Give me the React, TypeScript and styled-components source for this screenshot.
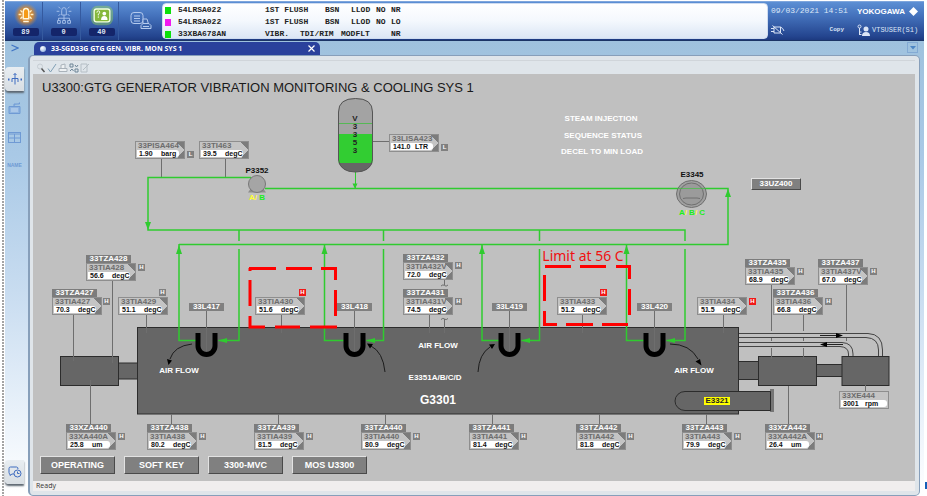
import React from "react";
import styled, { createGlobalStyle, css } from "styled-components";

const GlobalStyle = createGlobalStyle`
  * { box-sizing: border-box; }
  body { margin: 0; background: #fff; }
  button { font: inherit; border: 0; padding: 0; margin: 0; background: none; color: inherit; }
  h1, ul, li { margin: 0; padding: 0; list-style: none; font-weight: normal; }
`;

const sans = `"Liberation Sans", Arial, sans-serif`;
const mono = `"Liberation Mono", "Courier New", monospace`;
const ui = `"Open Sans", "Noto Sans", sans-serif`;

/* ---------- shell ---------- */

const Page = styled.div`
  display: flex;
  flex-direction: column;
  min-height: 100vh;
  padding: 1px 3px 0 5px;
  font-family: ${sans};
  background:
    linear-gradient(#1560b8, #1560b8) right bottom 7px / 2px 7px no-repeat,
    radial-gradient(circle at 3px 1px, #a4a4a4 1px, transparent 1px) 0 30px / 5px 3px repeat-y,
    #fff;
`;

const Header = styled.header`
  display: flex;
  height: 40px;
  flex: none;
  border-top: 1px solid #7fa6dc;
  border-bottom: 1px solid #1c3566;
  background: linear-gradient(#5c8fd4, #4573bd 35%, #24458f 90%, #1d3a80);
`;

const AlarmButton = styled.button`
  display: flex;
  flex-direction: column;
  align-items: center;
  justify-content: flex-end;
  width: 38px;
  padding: 0 0 4px 4px;
  border-right: 1px solid #355a9f;
  color: #dfe6f5;

  svg {
    flex: none;
  }
`;

const AlarmCount = styled.span`
  width: 26px;
  margin-top: 1px;
  border-radius: 2px;
  background: #14256a;
  font: bold 7px/8px ${mono};
  text-align: center;
`;

const PrintButton = styled.button`
  display: grid;
  place-items: center;
  width: 43px;
`;

const Messages = styled.ul`
  flex: 1;
  min-width: 0;
  margin: 1px 0 1px;
  padding: 0 2px;
  border-radius: 4px;
  border: 1px solid #cfdcf0;
  background: linear-gradient(#fff, #f4f8fd 50%, #dbe6f5);
`;

const Message = styled.li`
  display: flex;
  align-items: center;
  height: 12px;
  font: bold 8px/10px ${mono};
  color: #222;
  white-space: pre;
`;

const Swatch = styled.i<{ $color: string }>`
  width: 6px;
  height: 7px;
  margin-right: 7px;
  background: ${(p) => p.$color};
`;

const Cell = styled.span<{ $w: number }>`
  flex: 0 0 ${(p) => p.$w}px;
`;

const Session = styled.div`
  display: grid;
  grid-template-columns: 86px 1fr;
  grid-template-rows: 17px 21px;
  align-items: center;
  width: 156px;
  padding-left: 3px;
  color: #dbe5f6;
`;

const Clock = styled.time`
  font: 8px/10px ${mono};
  white-space: nowrap;
`;

const Brand = styled.div`
  display: flex;
  align-items: center;
  gap: 4px;
  padding-top: 2px;
  font: bold 8px/10px ${sans};
  color: #fff;
`;

const Tools = styled.div`
  display: flex;
  justify-content: space-between;
  align-items: center;
  padding-right: 13px;
`;

const CopyButton = styled.button`
  font: bold 6px/10px ${mono};
`;

const User = styled.div`
  display: flex;
  align-items: center;
  gap: 2px;
  font: 7px/10px ${mono};
`;

const Body = styled.div`
  display: flex;
  flex: 1;
  padding-right: 4px;
  background: linear-gradient(#9fc2de, #a9c9e6 25%, #c8dcf0 55%, #edf4fb 85%, #fff);
`;

const Side = styled.nav`
  display: flex;
  flex-direction: column;
  align-items: flex-start;
  width: 23px;
  flex: none;
`;

const SideButton = styled.button<{ $h: number }>`
  display: grid;
  place-items: center;
  width: 19px;
  height: ${(p) => p.$h}px;
  font: bold 5px/8px ${sans};
  color: #6f9ad4;
`;

const SideTab = styled(SideButton)`
  border-radius: 4px 0 0 4px;
  background: linear-gradient(#e8edf1, #d8dee3);
  box-shadow: 0 2px 2px #5c6670;
`;

const SideGap = styled.div<{ $h?: number }>`
  flex: ${(p) => (p.$h ? `0 0 ${p.$h}px` : "1")};
`;

const Main = styled.main`
  display: flex;
  flex-direction: column;
  flex: 1;
  min-width: 0;
`;

const TabBar = styled.div`
  display: flex;
  align-items: flex-end;
  justify-content: space-between;
  height: 14px;
  padding: 0 2px 0 6px;
`;

const Tab = styled.div`
  display: flex;
  align-items: center;
  width: 286px;
  height: 13px;
  padding: 0 5px 0 6px;
  border-radius: 5px 5px 0 0;
  background: #2a419c;
  color: #fff;
  font: bold 7px/10px ${ui};
`;

const Orb = styled.i`
  width: 6px;
  height: 6px;
  margin-right: 5px;
  border-radius: 50%;
  background: radial-gradient(circle at 35% 30%, #fff, #7ea4dc);
`;

const Close = styled.button`
  display: grid;
  margin-left: auto;
`;

const Drop = styled.button`
  display: grid;
  place-items: center;
  width: 11px;
  height: 11px;
  margin-bottom: 2px;
  border: 1px solid #83aad4;
`;

const Frame = styled.section`
  display: flex;
  flex-direction: column;
  flex: 1;
  padding: 4px 4px 4px 3px;
  border: 1px solid #879fba;
  border-left-width: 2px;
  border-radius: 5px;
  background: #dfe5ea;
`;

const Toolbar = styled.div`
  display: flex;
  align-items: center;
  gap: 1px;
  height: 14px;
  padding-left: 3px;
  border-top: 1px solid #d0d5da;
`;

const ToolButton = styled.button`
  display: grid;
  width: 10px;
  height: 10px;
`;

const Canvas = styled.div`
  position: relative;
  display: flex;
  flex-direction: column;
  flex: 1;
  min-height: 406px;
  overflow: hidden;
  background: #c0c0c0;
`;

const Title = styled.h1`
  padding: 6px 0 0 9px;
  font: 13px/16px ${sans};
  color: #1a1a1a;
`;

const Actions = styled.div`
  display: flex;
  gap: 9px;
  margin: auto 0 7px 7px;
`;

const raised = css`
  border: 1px solid;
  border-color: #e2e2e2 #4a4a4a #4a4a4a #e2e2e2;
  background: #808080;
  color: #fff;
`;

const Action = styled.button`
  ${raised}
  width: 75px;
  height: 18px;
  font: bold 9px/10px ${sans};
`;

const Status = styled.footer`
  height: 10px;
  padding-left: 3px;
  background: #f0eeee;
  font: 7px/10px ${ui};
  color: #333;
`;

/* ---------- mimic parts ---------- */

/* Diagram coordinates are screen units; the drawing area starts here. */
const OX = 33;
const OY = 74;

const Drawing = styled.svg`
  position: absolute;
  left: 0;
  top: 0;
  width: 882px;
  height: 406px;
`;

const placed = css<{ $x: number; $y: number }>`
  position: absolute;
  left: ${(p) => p.$x - OX}px;
  top: ${(p) => p.$y - OY}px;
`;

const Label = styled.div<{ $x: number; $y: number; $color?: string; $size?: number }>`
  ${placed}
  transform: translateX(-50%);
  font: bold ${(p) => p.$size ?? 8}px/10px ${sans};
  color: ${(p) => p.$color ?? "#fff"};
  white-space: nowrap;
`;

const Caption = styled(Label)`
  font: 14px/16px "Noto Sans", sans-serif;
`;

const VesselName = styled(Label)`
  width: 6px;
  line-height: 8px;
  text-align: center;
  white-space: normal;
  word-break: break-all;
`;

const Part = styled.span<{ $color: string }>`
  color: ${(p) => p.$color};
`;

const CoolerTag = styled.div<{ $x: number; $y: number }>`
  ${placed}
  width: 35px;
  height: 8px;
  background: #808080;
  color: #fff;
  font: bold 8px/8px ${sans};
  text-align: center;
`;

const YellowTag = styled(CoolerTag)`
  width: 26px;
  background: #ffff00;
  color: #222;
`;

const LinkButton = styled.button<{ $x: number; $y: number }>`
  ${placed}
  ${raised}
  width: 50px;
  height: 12px;
  font: bold 8px/10px ${sans};
`;

const Node = styled.div<{ $x: number; $y: number }>`
  ${placed}
  width: 50px;
`;

const Trip = styled.div`
  width: 45px;
  height: 8px;
  background: #7c7c7c;
  color: #fff;
  font: bold 8px/8px ${sans};
  text-align: center;
`;

const Plate = styled.div<{ $plain?: boolean }>`
  height: 18px;
  border: 1px solid #8e8e8e;
  background: ${(p) =>
    p.$plain
      ? "#c4c4c4"
      : `linear-gradient(to top right, transparent 50%, #7c7c7c 52%) right top / 8px 8px no-repeat,
         linear-gradient(to bottom right, transparent 50%, #7c7c7c 52%) right bottom / 7px 8px no-repeat, #c4c4c4`};
`;

const TagName = styled.div`
  height: 8px;
  padding-left: 2px;
  font: bold 8px/8px ${sans};
  color: #6c6c6c;
`;

const Value = styled.div<{ $plain?: boolean }>`
  display: grid;
  grid-template-columns: 22px auto;
  height: 7px;
  margin: 0 ${(p) => (p.$plain ? 1 : 5)}px 0 1px;
  padding-left: 2px;
  border-radius: 0 3px 3px 0;
  background: #fff;
  color: #111;
  font: bold 7px/7px ${sans};
`;

const Flag = styled.div<{ $x: number; $y: number; $alarm?: boolean }>`
  ${placed}
  width: 7px;
  height: 7px;
  background: ${(p) => (p.$alarm ? "#f01818" : "#808080")};
  color: #fff;
  font: bold 6px/7px ${sans};
  text-align: center;
`;

type Reading = {
  x: number;
  y: number;
  tag: string;
  value: string;
  unit: string;
  trip?: string;
  flag?: [string, number, number];
  alarm?: boolean;
  plain?: boolean;
};

const readings: Reading[] = [
  { x: 135, y: 141, tag: "33PISA464", value: "1.90", unit: "barg", flag: ["L", 187, 151] },
  { x: 199, y: 141, tag: "33TI463", value: "39.5", unit: "degC" },
  { x: 389, y: 134, tag: "33LISA423", value: "141.0", unit: "LTR", flag: ["L", 441, 144] },
  { x: 86, y: 263, tag: "33TIA428", value: "56.6", unit: "degC", trip: "33TZA428", flag: ["H", 138, 264] },
  { x: 52, y: 297, tag: "33TIA427", value: "70.3", unit: "degC", trip: "33TZA427", flag: ["H", 103, 298] },
  { x: 118, y: 297, tag: "33TIA429", value: "51.1", unit: "degC", flag: ["H", 159, 289] },
  { x: 255, y: 297, tag: "33TIA430", value: "51.6", unit: "degC", flag: ["H", 299, 289], alarm: true },
  { x: 403, y: 262, tag: "33TIA432V", value: "72.0", unit: "degC", trip: "33TZA432", flag: ["H", 455, 262] },
  { x: 403, y: 297, tag: "33TIA431V", value: "74.5", unit: "degC", trip: "33TZA431", flag: ["H", 455, 298] },
  { x: 557, y: 297, tag: "33TIA433", value: "51.2", unit: "degC", flag: ["H", 600, 289], alarm: true },
  { x: 697, y: 297, tag: "33TIA434", value: "51.5", unit: "degC", flag: ["H", 749, 298], alarm: true },
  { x: 745, y: 267, tag: "33TIA435", value: "68.9", unit: "degC", trip: "33TZA435", flag: ["H", 797, 268] },
  { x: 818, y: 267, tag: "33TIA437V", value: "67.0", unit: "degC", trip: "33TZA437", flag: ["H", 870, 268] },
  { x: 773, y: 297, tag: "33TIA436", value: "66.8", unit: "degC", trip: "33TZA436", flag: ["H", 825, 298] },
  { x: 839, y: 391, tag: "33XE444", value: "3001", unit: "rpm", plain: true },
  { x: 66, y: 432, tag: "33XA440A", value: "25.8", unit: "um", trip: "33XZA440", flag: ["H", 118, 433] },
  { x: 147, y: 432, tag: "33TIA438", value: "80.2", unit: "degC", trip: "33TZA438", flag: ["H", 199, 433] },
  { x: 254, y: 432, tag: "33TIA439", value: "81.5", unit: "degC", trip: "33TZA439", flag: ["H", 306, 433] },
  { x: 361, y: 432, tag: "33TIA440", value: "80.9", unit: "degC", trip: "33TZA440", flag: ["H", 413, 433] },
  { x: 469, y: 432, tag: "33TIA441", value: "81.4", unit: "degC", trip: "33TZA441", flag: ["H", 520, 433] },
  { x: 576, y: 432, tag: "33TIA442", value: "81.8", unit: "degC", trip: "33TZA442", flag: ["H", 627, 433] },
  { x: 682, y: 432, tag: "33TIA443", value: "79.9", unit: "degC", trip: "33TZA443", flag: ["H", 734, 433] },
  { x: 765, y: 432, tag: "33XA442A", value: "26.4", unit: "um", trip: "33XZA442", flag: ["H", 816, 433] },
];

function ReadingNode({ r }: { r: Reading }) {
  return (
    <>
      <Node $x={r.x} $y={r.trip ? r.y - 8 : r.y}>
        {r.trip && <Trip>{r.trip}</Trip>}
        <Plate $plain={r.plain}>
          <TagName>{r.tag}</TagName>
          <Value $plain={r.plain}>
            <span>{r.value}</span>
            <span>{r.unit}</span>
          </Value>
        </Plate>
      </Node>
      {r.flag && (
        <Flag $x={r.flag[1]} $y={r.flag[2]} $alarm={r.alarm}>
          {r.flag[0]}
        </Flag>
      )}
    </>
  );
}

const coolers = [
  { x: 206.5, left: 179, right: 239, name: "33L417" },
  { x: 354.5, left: 324.5, right: 383.5, name: "33L418" },
  { x: 509.5, left: 482, right: 539.5, name: "33L419" },
  { x: 654.5, left: 626.5, right: 685, name: "33L420" },
];

const G = "#2fcb2f";

function Plant() {
  return (
    <Drawing viewBox="33 74 882 406" aria-hidden="true">
      {/* machine train */}
      <g fill="#666" stroke="#2c2c2c">
        <rect x="118" y="363" width="20" height="16" />
        <rect x="60.5" y="356.5" width="58" height="29" />
        <rect x="738.5" y="361.5" width="21" height="18" />
        <rect x="816.5" y="364.5" width="26" height="12" />
        <rect x="758.5" y="356.5" width="58" height="29" />
        <rect x="842" y="356.5" width="47" height="29" />
        <rect x="137.5" y="327.5" width="601" height="86.5" />
        <path d="M770.5 391.5H685a10 9.5 0 0 0 0 19H770.5z" />
        <path d="M771 389V412M773 389V412" />
      </g>

      {/* lube oil pipes */}
      <g fill="none" stroke="#444">
        <path d="M739 333.5H868Q882.5 334 882.5 350V356M739 337.5H866Q878.5 338 878.5 350V356" />
        <path d="M739 342.5H842Q853 343 853 354V356M739 346.5H840Q848.5 347 848.5 354V356" />
        <path d="M820 335.5H838M824 344.5H843" stroke="#222" />
      </g>
      <path d="M843 335.500l-7-2.500v5zM820 344.500l7-2.500v5z" fill="#000" />

      {/* instrument leads */}
      <path
        fill="none"
        stroke="#6e6e6e"
        d="M161.5 158V177M225.5 158V177M373 141.5H389M73.5 314V361M112.5 280V363M90.5 380V425M146.500 314V333M281.500 314V333M429.500 314V333M444.500 279V285M444.500 319V333M582.500 314V333M723.500 314V333M771.500 284V331M771.500 338V341M771.500 348V359M803.500 314V331M803.500 338V341M803.500 348V359M846.500 284V331M846.500 338V341M171.500 414V425M278.500 414V425M385.500 414V425M492.500 414V425M599.500 414V425M706.500 414V425M788.500 386V425M865.500 385V391M441 286q2-2 3.500-.5t3.500-.5M441 319.500q2-2 3.500-.5t3.500-.5"
      />

      {/* cooling water */}
      <g fill="none" stroke={G} strokeWidth="1.5">
        <path d="M251 177.500H148V230H685V241M239 230V241M383.500 230V241M539.500 230V241" />
        <path d="M265 188.500H728V244.500H179" />
        <path d="M355.500 172V188" strokeWidth="1" />
        {coolers.map((c) => (
          <path key={c.name} d={`M${c.left} 244V340.5H${c.x - 10}M${c.right} 249V340.5H${c.x + 12}`} />
        ))}
      </g>
      <g fill={G}>
        <path d="M145 222h6l-3 8zM352.500 183.500h5l-2.500 5.500zM725 197h6l-3-8z" />
        {coolers.map((c) => (
          <path key={c.name} d={`M${c.left - 3} 254h6l-3-9zM${c.x + 11.5} 340.5l9-2.5v5z`} />
        ))}
      </g>

      {/* cooler coils */}
      {coolers.map((c) => (
        <g key={c.name} fill="none">
          <path d={`M${c.x - 8.5} 333V346a8.5 8.5 0 0 0 17 0V333`} stroke="#000" strokeWidth="5" />
          <path d={`M${c.x} 311V351`} stroke="#6e6e6e" />
        </g>
      ))}

      {/* air flow arrows */}
      <g fill="none" stroke="#1c1c1c">
        <path d="M192 344Q174 346 170 359M385 372Q383 352 371 346M478 372Q479 354 490 347M670 344Q690 344 698 359" />
      </g>
      <path d="M168.500 365l-1.500-6 5 1.500zM367 343.500l6 .5-3 4.500zM495 344l-6 .5 3 4.500zM701.500 365.500l-6-4 4.500-2.500z" fill="#000" />

      {/* storage vessel */}
      <path d="M338.500 112q0-14 17-14t17 14V134H338.500z" fill="#a3a3a3" />
      <rect x="338.5" y="134" width="34" height="29" fill="#32cd32" />
      <path d="M338.500 163h34q-4 9-17 9t-17-9z" fill="#666" />
      <path d="M338.500 123.500h34" stroke="#55b855" />
      <path d="M338.500 112q0-13.500 17-13.500t17 13.500V160q-2 12-17 12t-17-12z" fill="none" stroke="#555" />

      {/* pump */}
      <path d="M251 188l-3 4.500h18l-3-4.500z" fill="#8c8c8c" />
      <circle cx="257" cy="184" r="8.5" fill="#a5a5a5" stroke="#777" />

      {/* exchanger */}
      <g fill="#9a9a9a" fillOpacity=".85" stroke="#6f6f6f">
        <ellipse cx="691.5" cy="194" rx="15" ry="13.5" />
        <ellipse cx="691.5" cy="194" rx="12" ry="11" />
        <path d="M683 198.500l3-.5h11l3 .5" fill="none" />
      </g>
      <path d="M677 188.500h29" stroke={G} opacity=".55" />

      {/* limit call-outs */}
      <path
        fill="none"
        stroke="#f00"
        strokeWidth="3"
        d="M249 268.500H276M286 268.500H312M321 268.500H335.500V280M335.500 290V316M337 327H310M300 327H275M265 327H250V316M250 306V280M250 268V271M545 266.500H571M580 266.500H606M616 266.500H629.500V279M629.500 289V315M628 324.500H602M593 324.500H566M557 324.500H544.500V311M544.500 301V275"
      />
    </Drawing>
  );
}

/* ---------- icons ---------- */

const rays = "M2 4l2 2M14 4l-2 2M0 8.5h3M13 8.5h3M2 13l2-2M14 13l-2-2";

function LampIcon() {
  return (
    <svg width="24" height="24" viewBox="-5 -4 26 26" fill="none">
      <defs>
        <radialGradient id="lampGlow">
          <stop offset="0" stopColor="#ff9d1c" />
          <stop offset=".6" stopColor="#e08a25" stopOpacity=".8" />
          <stop offset="1" stopColor="#b58a5a" stopOpacity="0" />
        </radialGradient>
      </defs>
      <circle cx="8" cy="9" r="13" fill="url(#lampGlow)" />
      <path d={rays} stroke="#fff1c8" strokeWidth="1.5" />
      <path d="M5 13V6q0-4 3-4t3 4v7zM5 16h6" stroke="#fff8e0" strokeWidth="1.5" fill="#f59a16" />
    </svg>
  );
}

function SystemIcon() {
  return (
    <svg width="24" height="24" viewBox="-5 -4 26 26" fill="none" stroke="#a9c2ea">
      <path d="M2 0l2 2M14 0l-2 2M0 5h3M13 5h3M2 10l2-2M14 10l-2-2" />
      <path d="M5.500 9V4q0-3 2.500-3t2.500 3v5zM8 9v6M2 15v-2.500h12V15" />
      <path d="M1 15h3v3H1zM6.500 15h3v3h-3zM12 15h3v3h-3z" />
    </svg>
  );
}

function GuideIcon() {
  return (
    <svg width="24" height="24" viewBox="0 0 26 26" fill="none">
      <rect x="1" y="3" width="24" height="21" rx="7" fill="#9fe04a" opacity=".4" />
      <rect x="4.500" y="6.500" width="17" height="14" rx="2.500" fill="#86b83c" stroke="#f1ffe0" strokeWidth="1.500" />
      <path d="M7.500 10.500q0-2 1.500-2t1.500 1.500-1.500 2v1.500M9 14.500v1.500" stroke="#fff" />
      <circle cx="15.500" cy="11.500" r="2" fill="#fff" />
      <path d="M12 18.500q0-4.500 3.500-4.500t3.500 4.500z" fill="#fff" />
    </svg>
  );
}

function PrinterIcon() {
  return (
    <svg width="22" height="20" viewBox="0 0 22 20" fill="none" stroke="#b4caee">
      <rect x="1" y="1.5" width="12" height="11" rx="3" />
      <path d="M4 5h6M4 7.500h6M4 10h6" />
      <path d="M13 13V8h4l1.500 5M11 17.500v-3l2-2h6l2 2v3z" fill="#3a65ad" />
      <path d="M13 15.500h6" />
    </svg>
  );
}

/* ---------- page ---------- */

const messages = [
  { color: "#0be00b", cells: [["54LRSA022", 87], ["1ST FLUSH", 60], ["BSN", 26], ["LLOD", 25], ["NO", 15], ["NR", 20]] },
  { color: "#f018f0", cells: [["54LRSA022", 87], ["1ST FLUSH", 60], ["BSN", 26], ["LLOD", 25], ["NO", 15], ["LO", 20]] },
  { color: "#0be00b", cells: [["33XBA678AN", 87], ["VIBR.", 35], ["TDI/RIM", 41], ["MODFLT", 50], ["NR", 20]] },
] as { color: string; cells: [string, number][] }[];

export default function App() {
  return (
    <>
      <GlobalStyle />
      <Page>
        <Header>
          <AlarmButton aria-label="Process alarms">
            <LampIcon />
            <AlarmCount>89</AlarmCount>
          </AlarmButton>
          <AlarmButton aria-label="System alarms">
            <SystemIcon />
            <AlarmCount>0</AlarmCount>
          </AlarmButton>
          <AlarmButton aria-label="Operator guide">
            <GuideIcon />
            <AlarmCount>40</AlarmCount>
          </AlarmButton>
          <PrintButton aria-label="Print messages">
            <PrinterIcon />
          </PrintButton>
          <Messages>
            {messages.map((m, i) => (
              <Message key={i}>
                <Swatch $color={m.color} />
                {m.cells.map(([text, w]) => (
                  <Cell key={text} $w={w}>
                    {text}
                  </Cell>
                ))}
              </Message>
            ))}
          </Messages>
          <Session>
            <Clock>09/03/2021 14:51</Clock>
            <Brand>
              YOKOGAWA
              <svg width="9" height="9" viewBox="0 0 9 9">
                <path d="M4.500 0L9 4.500 4.500 9 0 4.500z" fill="#fff" />
              </svg>
            </Brand>
            <Tools>
              <svg width="14" height="10" viewBox="0 0 14 10" fill="none" stroke="#dbe5f6">
                <path d="M0 3.500h3M0 6.500h3M3 2h6.500v6H3zM1.500 0.500l10 9M9.500 2q2.500 1 3.500 4" />
              </svg>
              <CopyButton>Copy</CopyButton>
            </Tools>
            <User>
              <svg width="13" height="12" viewBox="0 0 13 12" fill="#dbe5f6">
                <path d="M2.500 4v7M2.500 10.500h2M2.500 8h2" stroke="#dbe5f6" />
                <circle cx="2.5" cy="2.5" r="1.5" fill="none" stroke="#dbe5f6" />
                <circle cx="9" cy="5" r="2.5" />
                <path d="M5 12q0-4 4-4t4 4z" />
              </svg>
              VTSUSER(S1)
            </User>
          </Session>
        </Header>

        <Body>
          <Side>
            <SideButton $h={14} aria-label="Expand">
              <svg width="8" height="8" viewBox="0 0 8 8" fill="none" stroke="#3f74c4" strokeWidth="1.2">
                <path d="M.5 1l6.500 3-6.500 3" />
              </svg>
            </SideButton>
            <SideGap $h={12} />
            <SideTab $h={24} aria-label="System tree">
              <svg width="14" height="14" viewBox="0 0 14 14" fill="none" stroke="#3f6cc0">
                <path d="M7 1.500v11M4 10V6.500h6V10M5.500 3L7 1.500 8.500 3" />
                <path d="M0 7.500h1.500M12.500 7.500H14" strokeWidth="2" />
              </svg>
            </SideTab>
            <SideButton $h={34} aria-label="Tool box">
              <svg width="14" height="14" viewBox="0 0 14 14" fill="#8fb4e0" stroke="#6f9ad4">
                <path d="M1 5.500h11v7H1zM6 5V3h5.500V1.500" />
                <path d="M3 8h7M3 10h7" stroke="#c5daf0" />
              </svg>
            </SideButton>
            <SideButton $h={25} aria-label="Windows">
              <svg width="13" height="11" viewBox="0 0 13 11" fill="none" stroke="#6f9ad4">
                <rect x=".5" y=".5" width="12" height="10" />
                <path d="M.5 2h12M.5 6h12M6.500 2v9" />
              </svg>
            </SideButton>
            <SideButton $h={30}>NAME</SideButton>
            <SideGap />
            <SideTab $h={24} aria-label="History">
              <svg width="14" height="14" viewBox="0 0 14 14" fill="none" stroke="#3f6cc0">
                <path d="M6 9H4l-2 1.500V9Q1 9 1 7.500V3.500Q1 2 2.500 2h6Q10 2 10 4" />
                <circle cx="9.5" cy="8.5" r="3.5" />
                <path d="M9.500 6.500v2h2" />
              </svg>
            </SideTab>
            <SideGap $h={12} />
          </Side>

          <Main>
            <TabBar>
              <Tab>
                <Orb />
                33-SGD33G GTG GEN. VIBR. MON SYS 1
                <Close aria-label="Close tab">
                  <svg width="7" height="7" viewBox="0 0 7 7" stroke="#fff" strokeWidth="1.2">
                    <path d="M.5 .5l6 6M6.500 .5l-6 6" />
                  </svg>
                </Close>
              </Tab>
              <Drop aria-label="Tab list">
                <svg width="6" height="4" viewBox="0 0 6 4">
                  <path d="M0 0h6L3 3.500z" fill="#4d86c4" />
                </svg>
              </Drop>
            </TabBar>

            <Frame>
              <Toolbar>
                <ToolButton aria-label="Find">
                  <svg width="10" height="10" viewBox="0 0 10 10" fill="none" stroke="#8f989f">
                    <circle cx="4" cy="3.5" r="2.5" stroke="#c5ccd2" />
                    <path d="M5.500 5.500l3 3.500" stroke="#555" strokeWidth="1.5" />
                  </svg>
                </ToolButton>
                <ToolButton aria-label="Acknowledge">
                  <svg width="10" height="10" viewBox="0 0 10 10" fill="none" stroke="#7f9fb5">
                    <path d="M1 5.500l2.500 3.500L9 1" />
                  </svg>
                </ToolButton>
                <ToolButton aria-label="Print">
                  <svg width="10" height="10" viewBox="0 0 10 10" fill="#eef1f3" stroke="#a9b2ba">
                    <path d="M3 5V2l4-1v4M1 5.500h8v3H1z" />
                  </svg>
                </ToolButton>
                <ToolButton aria-label="Exchange">
                  <svg width="10" height="10" viewBox="0 0 10 10" fill="none" stroke="#6c8496">
                    <path d="M1 1h3v3H1zM6 2l1.500 2L9 2M6 6h3v3H6zM1 8l2-2 1.500 2" />
                  </svg>
                </ToolButton>
                <ToolButton aria-label="Edit">
                  <svg width="10" height="10" viewBox="0 0 10 10" fill="none" stroke="#b5bec5">
                    <path d="M1 1h6v8H1zM3 7l6-6" />
                  </svg>
                </ToolButton>
              </Toolbar>

              <Canvas>
                <Title>U3300:GTG GENERATOR VIBRATION MONITORING &amp; COOLING SYS 1</Title>
                <Plant />
                {readings.map((r) => (
                  <ReadingNode key={r.tag} r={r} />
                ))}
                {coolers.map((c) => (
                  <CoolerTag key={c.name} $x={Math.floor(c.x) - 17} $y={303}>
                    {c.name}
                  </CoolerTag>
                ))}
                <YellowTag $x={704} $y={397}>E3321</YellowTag>
                <LinkButton $x={751} $y={178}>33UZ400</LinkButton>

                <VesselName $x={355} $y={115} $color="#222">V3353</VesselName>
                <Label $x={257} $y={166} $color="#111">P3352</Label>
                <Label $x={257} $y={193}>
                  <Part $color="#ffff30">A/ </Part>
                  <Part $color="#18f018">B</Part>
                </Label>
                <Label $x={692} $y={170} $color="#111">E3345</Label>
                <Label $x={692} $y={208}>
                  <Part $color="#18f018">A</Part>
                  <Part $color="#ffff30">/ </Part>
                  <Part $color="#18f018">B</Part>
                  <Part $color="#ffff30">/ </Part>
                  <Part $color="#18f018">C</Part>
                </Label>
                <Label $x={601} $y={114}>STEAM INJECTION</Label>
                <Label $x={603} $y={131}>SEQUENCE STATUS</Label>
                <Label $x={602} $y={147}>DECEL TO MIN LOAD</Label>
                <Label $x={179} $y={366}>AIR FLOW</Label>
                <Label $x={438} $y={341}>AIR FLOW</Label>
                <Label $x={694} $y={366}>AIR FLOW</Label>
                <Label $x={435} $y={373}>E3351A/B/C/D</Label>
                <Label $x={438} $y={395} $size={12}>G3301</Label>
                <Caption $x={583} $y={248} $color="#f01010">Limit at 56 C</Caption>

                <Actions>
                  <Action>OPERATING</Action>
                  <Action>SOFT KEY</Action>
                  <Action>3300-MVC</Action>
                  <Action>MOS U3300</Action>
                </Actions>
              </Canvas>
              <Status>Ready</Status>
            </Frame>
          </Main>
        </Body>
      </Page>
    </>
  );
}
